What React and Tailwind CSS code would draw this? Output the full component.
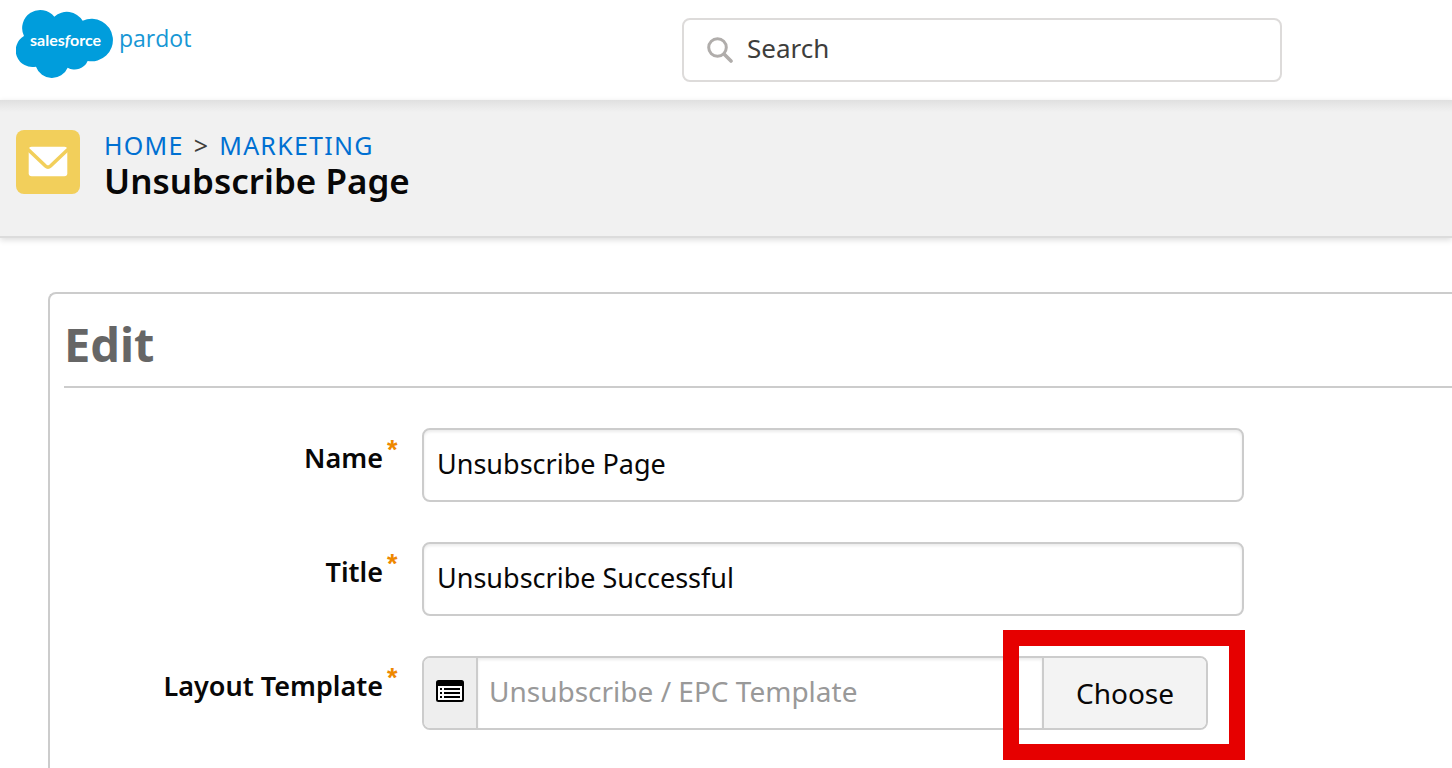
import React, { useState } from 'react';

const BREADCRUMBS = [
  { label: 'HOME', href: '#home' },
  { label: 'MARKETING', href: '#marketing' },
];

const INPUT_CLASS =
  'w-[822px] h-[74px] px-[13px] pb-1 rounded-lg border-2 border-[#cccccc] bg-white text-[27px] leading-9 text-[#080707] shadow-[inset_0_2px_3px_rgba(0,0,0,0.08)] outline-none';

const Logo = () => (
  <a href="#dashboard" aria-label="Salesforce Pardot" className="block">
    <svg width="184" height="70" viewBox="0 0 184 70">
      <path
        transform="translate(-16 -9) scale(0.3333)"
        fill="#009ddc"
        d="M72 108 A54.300 54.300 0 0 1 163 50 A56 56 0 0 1 248 62 A64 64 0 1 1 263 183 A42 42 0 0 1 203 203 A51 51 0 0 1 108 200 A50 50 0 0 1 72 108 Z"
      />
      <text x="14" y="37" fontFamily="Lato, sans-serif" fontSize="16" fontWeight="700" fill="#ffffff">
        sales<tspan fontStyle="italic">f</tspan>orce
      </text>
      <text x="103" y="38" fontFamily="Open Sans, sans-serif" fontSize="23" fontWeight="400" fill="#1797d5">
        pardot
      </text>
    </svg>
  </a>
);

const SearchIcon = () => (
  <svg width="26" height="26" viewBox="0 0 26 26" fill="none" stroke="#b0adab" className="shrink-0">
    <circle cx="10.500" cy="10.500" r="8.800" strokeWidth="3" />
    <path d="M17 17 L24 24" strokeWidth="3.600" strokeLinecap="round" />
  </svg>
);

const MailIcon = () => (
  <svg width="64" height="64" viewBox="0 0 64 64" className="shrink-0">
    <rect width="64" height="64" rx="8" fill="#f2cf5b" />
    <rect x="12.700" y="16.700" width="38.600" height="29.600" rx="3" fill="#ffffff" />
    <path d="M10 17.500 L29.500 36 Q32 38.200 34.500 36 L54 17.500" fill="none" stroke="#f2cf5b" strokeWidth="3.600" />
  </svg>
);

const TemplateIcon = () => (
  <svg width="28" height="22" viewBox="0 0 28 22">
    <rect width="28" height="22" rx="2.500" fill="#000000" />
    <rect x="2" y="6" width="24" height="14" fill="#ffffff" />
    {[8, 12, 16].map((y) => (
      <g key={y} fill="#000000">
        <rect x="4" y={y} width="2" height="2" />
        <rect x="8" y={y} width="16" height="2" />
      </g>
    ))}
  </svg>
);

const Field = ({ id, label, children }) => (
  <div className="flex items-start gap-6">
    <label htmlFor={id} className="w-[334px] pt-3 flex justify-end items-start gap-1 text-[27px] leading-9 font-semibold text-[#080707]">
      {label}
      <span className="w-[11px] font-['Liberation_Sans',sans-serif] text-[27px] leading-5 font-bold text-[#ee8800]">*</span>
    </label>
    {children}
  </div>
);

const App = () => {
  const [name, setName] = useState('Unsubscribe Page');
  const [title, setTitle] = useState('Unsubscribe Successful');
  const [template, setTemplate] = useState('');

  return (
    <div className="min-h-screen flex flex-col overflow-hidden bg-white font-['Noto_Sans',sans-serif]">
      <header className="h-[100px] shrink-0 flex items-start justify-between pl-4 pr-[170px]">
        <div className="pt-[9px]">
          <Logo />
        </div>
        <label className="mt-[18px] w-[600px] h-16 flex items-center gap-[14px] px-[23px] rounded-lg border-2 border-[#dddbda]">
          <SearchIcon />
          <input
            type="search"
            aria-label="Search"
            placeholder="Search"
            className="w-full pb-1 text-[26px] leading-9 outline-none placeholder:text-[#3e3e3c]"
          />
        </label>
      </header>

      <div className="h-[138px] shrink-0 flex items-start gap-6 px-4 pt-[30px] border-b-2 border-[#dcdcdc] bg-[linear-gradient(#e0e0e0,#f1f1f1_12px)] shadow-[0_2px_6px_rgba(0,0,0,0.14)]">
        <MailIcon />
        <div>
          <nav className="flex gap-[10px] text-[25px] leading-[30px] tracking-wider text-[#3e3e3c]">
            {BREADCRUMBS.map((b, i) => (
              <React.Fragment key={b.label}>
                {i > 0 && <span>&gt;</span>}
                <a href={b.href} className="text-[#0070d2]">{b.label}</a>
              </React.Fragment>
            ))}
          </nav>
          <h1 className="text-[35px] leading-[42px] font-semibold text-[#080707]">Unsubscribe Page</h1>
        </div>
      </div>

      <main className="grow flex flex-col pt-[54px] pl-12">
        <form className="grow pl-[14px] rounded-tl-lg border-t-2 border-l-2 border-[#cccccc]" onSubmit={(e) => e.preventDefault()}>
          <h2 className="h-[94px] pt-5 border-b-2 border-[#cccccc] text-[47px] leading-[60px] font-bold text-[#666666]">Edit</h2>
          <div className="pt-10 flex flex-col gap-10">
            <Field id="name" label="Name">
              <input id="name" value={name} onChange={(e) => setName(e.target.value)} className={INPUT_CLASS} />
            </Field>
            <Field id="title" label="Title">
              <input id="title" value={title} onChange={(e) => setTitle(e.target.value)} className={INPUT_CLASS} />
            </Field>
            <Field id="template" label="Layout Template">
              <div className="relative w-[786px] h-[74px] flex rounded-lg border-2 border-[#cccccc]">
                <span className="w-[54px] shrink-0 flex items-center justify-center pb-1 rounded-l-md border-r-2 border-[#cccccc] bg-[#eeeeee]">
                  <TemplateIcon />
                </span>
                <input
                  id="template"
                  value={template}
                  placeholder="Unsubscribe / EPC Template"
                  onChange={(e) => setTemplate(e.target.value)}
                  className="grow px-[11px] pb-1 text-[28px] leading-9 shadow-[inset_0_2px_3px_rgba(0,0,0,0.08)] outline-none placeholder:text-[#999999]"
                />
                <button type="button" className="w-[164px] shrink-0 rounded-r-md border-l-2 border-[#cccccc] bg-[#f3f3f3] text-[28px] leading-9 text-[#080707]">
                  Choose
                </button>
                {/* highlight around the Choose button */}
                <div className="absolute -top-7 -right-[39px] w-[242px] h-[130px] border-[16px] border-[#e60000] pointer-events-none" />
              </div>
            </Field>
          </div>
        </form>
      </main>
    </div>
  );
};

export default App;
